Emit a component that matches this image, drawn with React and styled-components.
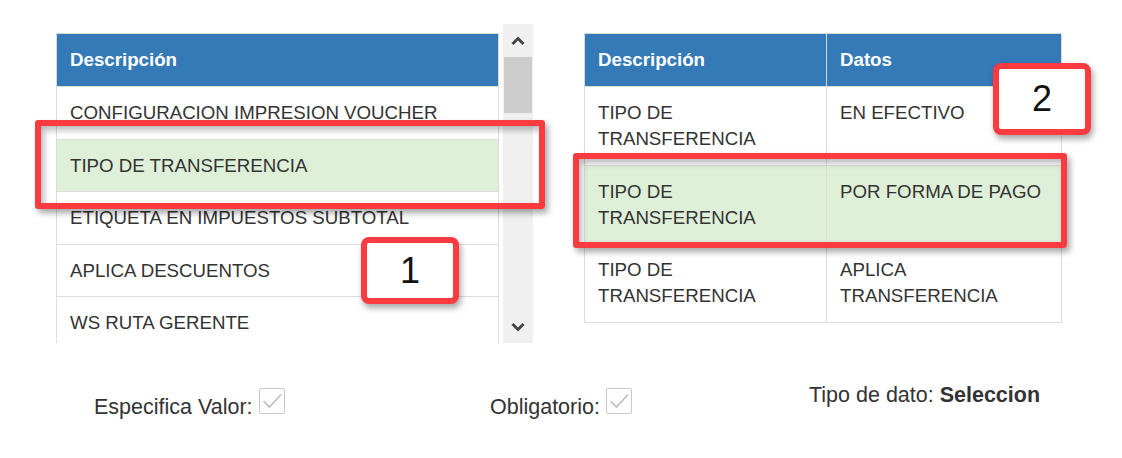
import React from "react";
import styled, { createGlobalStyle } from "styled-components";

const GlobalStyle = createGlobalStyle`
  html, body { margin: 0; padding: 0; background: #fff; }
  body { font-family: "Liberation Sans", Arial, sans-serif; color: #333; }
`;

const Page = styled.div`
  position: relative;
  width: 1122px;
  height: 458px;
  overflow: hidden;
  background: #fff;
`;

const TopSection = styled.div`
  display: flex;
  align-items: flex-start;
  gap: 51px;
  padding: 24px 0 0 56px;
`;

const ListPanel = styled.div`
  display: flex;
  gap: 4px;
  width: 477px;
  height: 319px;
`;

const ListViewport = styled.div`
  flex: 1;
  overflow: hidden;
  padding-top: 9px;
`;

const Scrollbar = styled.div`
  width: 30px;
  background: #f0f0f0;
  display: flex;
  flex-direction: column;
  align-items: center;
`;

const ScrollArrow = styled.div`
  height: ${(p) => p.$h}px;
  width: 100%;
  display: flex;
  align-items: center;
  justify-content: center;
`;

const ScrollThumb = styled.div`
  width: 28px;
  height: 56px;
  background: #cdcdcd;
`;

const ScrollSpace = styled.div`
  flex: 1;
`;

const TableWrap = styled.div`
  padding-top: 9px;
`;

const Table = styled.table`
  border-collapse: collapse;
  table-layout: fixed;
  width: ${(p) => p.$width}px;
  font-size: 18.7px;
  line-height: 26px;
`;

const Col = styled.col`
  width: ${(p) => (p.$w ? `${p.$w}px` : "auto")};
`;

const Th = styled.th`
  background: #337ab7;
  color: #fff;
  font-weight: bold;
  text-align: left;
  padding: 13px;
  border: 1px solid #d9d9d9;
`;

const Tr = styled.tr`
  background: ${(p) => (p.$selected ? "#dff0d8" : "#fff")};
`;

const Td = styled.td`
  padding: 13px 13px 12.5px;
  vertical-align: top;
  border: 1px solid #dddddd;
  color: #333;
`;

const BottomRow = styled.div`
  display: flex;
  align-items: flex-start;
  padding: 40px 0 0 94px;
`;

const Field = styled.div`
  width: ${(p) => (p.$w ? `${p.$w}px` : "auto")};
  margin-top: ${(p) => p.$top || 0}px;
  font-size: 21.5px;
  color: #333;
  white-space: nowrap;
`;

const Strong = styled.b`
  font-weight: bold;
`;

const Checkbox = styled.span`
  display: inline-block;
  box-sizing: border-box;
  width: 26px;
  height: 26px;
  margin-left: 6px;
  border: 1px solid #c9c9c9;
  border-radius: 2px;
  background: #fdfdfd;
  vertical-align: baseline;
  svg { display: block; }
`;

const Highlight = styled.div`
  position: absolute;
  left: ${(p) => p.$x}px;
  top: ${(p) => p.$y}px;
  width: ${(p) => p.$w}px;
  height: ${(p) => p.$h}px;
  box-sizing: border-box;
  border: 6px solid #fb3b40;
  border-radius: 3px;
  box-shadow: 3px 4px 6px rgba(0, 0, 0, 0.35), inset 3px 4px 6px rgba(0, 0, 0, 0.28);
  pointer-events: none;
`;

const Badge = styled.div`
  position: absolute;
  left: ${(p) => p.$x}px;
  top: ${(p) => p.$y}px;
  width: ${(p) => p.$w}px;
  height: ${(p) => p.$h}px;
  box-sizing: border-box;
  border: 6px solid #fb3b40;
  border-radius: 8px;
  background: #fff;
  box-shadow: 2px 4px 6px rgba(0, 0, 0, 0.35);
  display: flex;
  align-items: center;
  justify-content: center;
  font-family: "Liberation Sans", Arial, sans-serif;
  font-size: 36px;
  color: #111;
`;

const Chevron = ({ up }) => (
  <svg width="14" height="10" viewBox="0 0 14 10">
    <polyline
      points={up ? "1.5,8 7,2.5 12.5,8" : "1.5,2 7,7.5 12.5,2"}
      fill="none"
      stroke="#454545"
      strokeWidth="3"
      strokeLinejoin="miter"
    />
  </svg>
);

const CheckMark = () => (
  <svg width="24" height="24" viewBox="0 0 24 24">
    <polyline points="3.5,12 9.5,18 21,5.5" fill="none" stroke="#bdbdbd" strokeWidth="1.6" />
  </svg>
);

const leftRows = [
  { text: "CONFIGURACION IMPRESION VOUCHER" },
  { text: "TIPO DE TRANSFERENCIA", selected: true },
  { text: "ETIQUETA EN IMPUESTOS SUBTOTAL" },
  { text: "APLICA DESCUENTOS" },
  { text: "WS RUTA GERENTE" },
];

const rightRows = [
  { desc: ["TIPO DE", "TRANSFERENCIA"], data: ["EN EFECTIVO"] },
  { desc: ["TIPO DE", "TRANSFERENCIA"], data: ["POR FORMA DE PAGO"], selected: true },
  { desc: ["TIPO DE", "TRANSFERENCIA"], data: ["APLICA", "TRANSFERENCIA"] },
];

const Lines = ({ lines }) =>
  lines.map((l, i) => (
    <React.Fragment key={i}>
      {i > 0 && <br />}
      {l}
    </React.Fragment>
  ));

export default function App() {
  return (
    <Page>
      <GlobalStyle />
      <TopSection>
        <ListPanel>
          <ListViewport>
            <Table $width={443}>
              <thead>
                <tr>
                  <Th>Descripción</Th>
                </tr>
              </thead>
              <tbody>
                {leftRows.map((r, i) => (
                  <Tr key={i} $selected={r.selected}>
                    <Td>{r.text}</Td>
                  </Tr>
                ))}
              </tbody>
            </Table>
          </ListViewport>
          <Scrollbar>
            <ScrollArrow $h={33}>
              <Chevron up />
            </ScrollArrow>
            <ScrollThumb />
            <ScrollSpace />
            <ScrollArrow $h={32}>
              <Chevron />
            </ScrollArrow>
          </Scrollbar>
        </ListPanel>
        <TableWrap>
          <Table $width={478}>
            <colgroup>
              <Col $w={242} />
              <Col />
            </colgroup>
            <thead>
              <tr>
                <Th>Descripción</Th>
                <Th>Datos</Th>
              </tr>
            </thead>
            <tbody>
              {rightRows.map((r, i) => (
                <Tr key={i} $selected={r.selected}>
                  <Td>
                    <Lines lines={r.desc} />
                  </Td>
                  <Td>
                    <Lines lines={r.data} />
                  </Td>
                </Tr>
              ))}
            </tbody>
          </Table>
        </TableWrap>
      </TopSection>
      <BottomRow>
        <Field $w={396} $top={5}>
          Especifica Valor:
          <Checkbox>
            <CheckMark />
          </Checkbox>
        </Field>
        <Field $w={319} $top={5}>
          Obligatorio:
          <Checkbox>
            <CheckMark />
          </Checkbox>
        </Field>
        <Field>
          Tipo de dato: <Strong>Seleccion</Strong>
        </Field>
      </BottomRow>

      <Highlight $x={35} $y={120} $w={510} $h={89} />
      <Badge $x={361} $y={237} $w={98} $h={67}>1</Badge>
      <Highlight $x={573} $y={153} $w={494} $h={95} />
      <Badge $x={993} $y={63} $w={98} $h={72}>2</Badge>
    </Page>
  );
}
